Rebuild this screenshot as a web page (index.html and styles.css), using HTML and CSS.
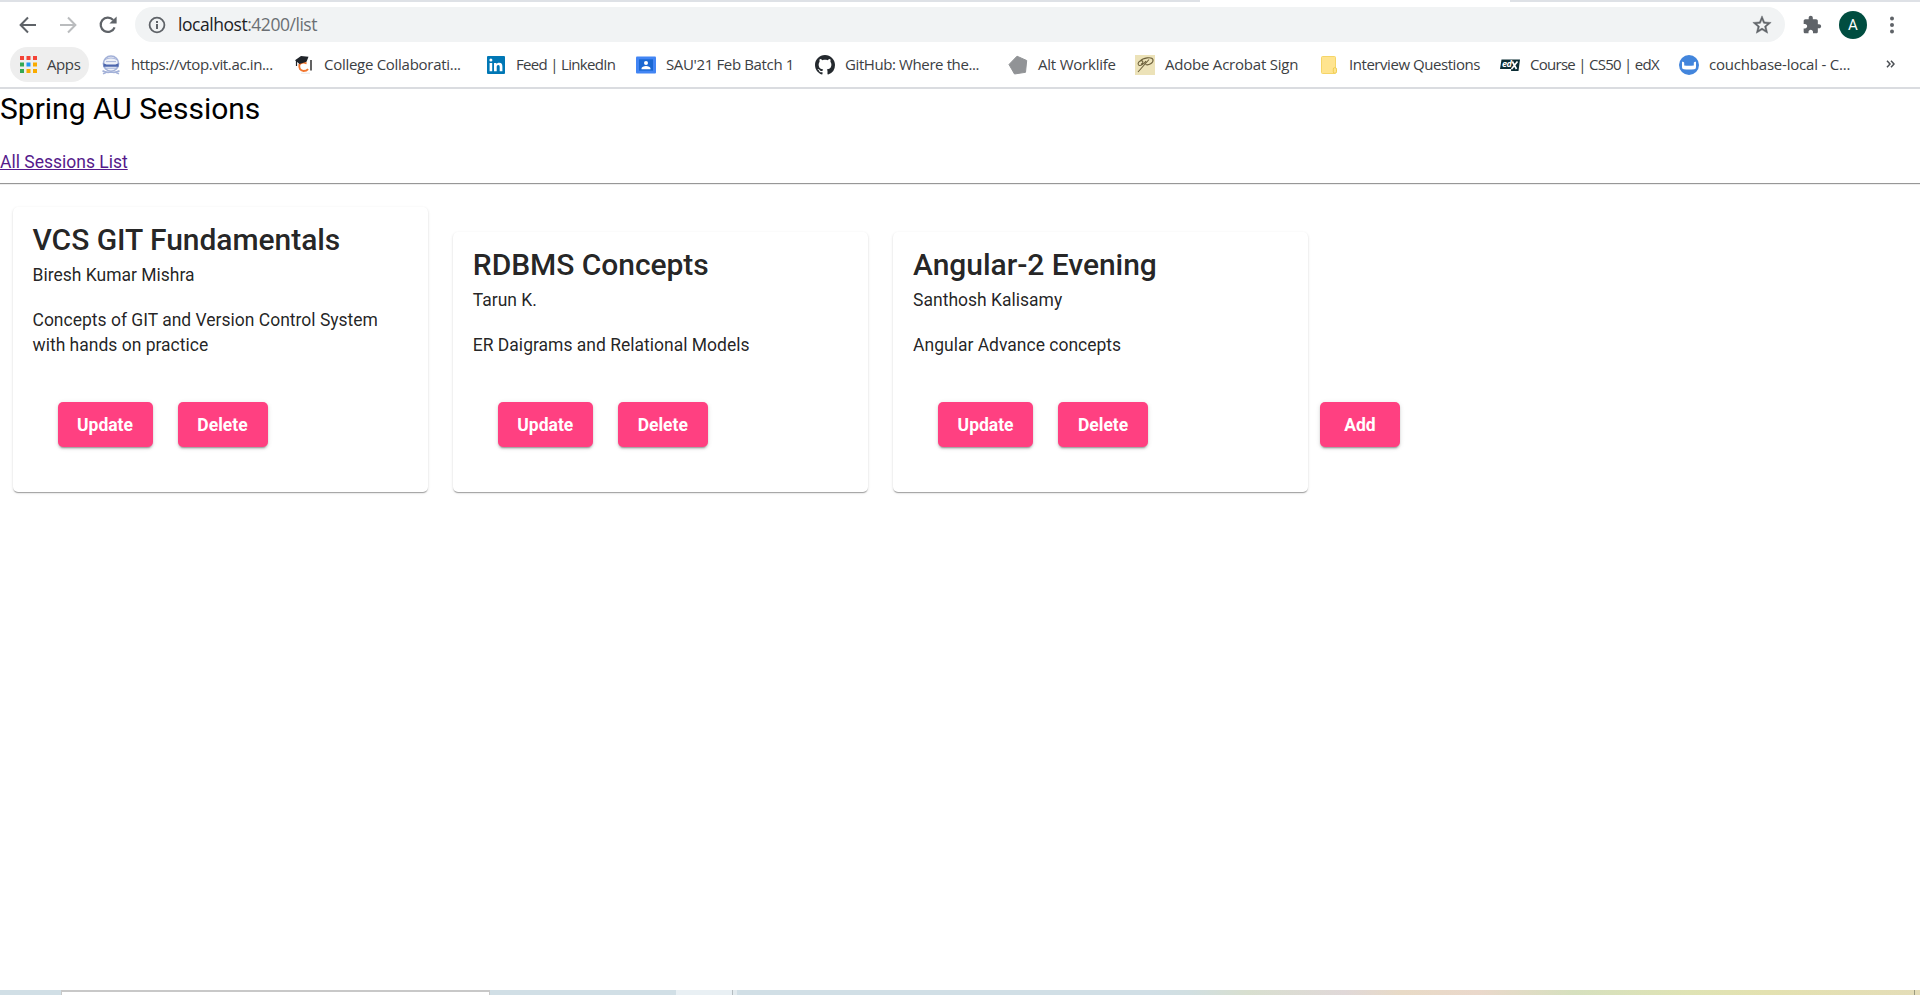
FILE: index.html
```html
<!DOCTYPE html>
<html lang="en">
<head>
<meta charset="utf-8">
<title>Spring AU Sessions</title>
<link rel="stylesheet" href="styles.css">
</head>
<body>
<div class="tabstrip"><span class="tab-active"></span></div>
<header class="toolbar">
  <svg class="nav" viewBox="0 0 20 20"><path d="M18 10H3M10 2.5L2.6 10l7.4 7.5" fill="none" stroke="#5f6368" stroke-width="2"/></svg>
  <svg class="nav" viewBox="0 0 20 20"><path d="M2 10h15M10 2.5l7.4 7.5-7.4 7.5" fill="none" stroke="#babcbe" stroke-width="2"/></svg>
  <svg class="nav" viewBox="0 0 20 20"><path d="M16.6 12.3A7.2 7.2 0 1 1 15.2 4.9" fill="none" stroke="#5f6368" stroke-width="2.2"/><path d="M18.6 1.4v7.2h-7.2z" fill="#5f6368"/></svg>
  <div class="omnibox">
    <svg class="info" viewBox="0 0 18 18"><circle cx="9" cy="9" r="7.4" fill="none" stroke="#5f6368" stroke-width="1.8"/><path d="M8 8h2v5H8zM8 5h2v2H8z" fill="#5f6368"/></svg>
    <span class="url">localhost<span class="path">:4200/list</span></span>
    <svg class="star" viewBox="0 0 24 24"><path fill="#5f6368" stroke="#5f6368" stroke-width=".5" d="M22 9.240l-7.190-.62L12 2 9.190 8.630 2 9.240l5.460 4.730L5.820 21 12 17.270 18.180 21l-1.630-7.030L22 9.240zM12 15.400l-3.760 2.270 1-4.280-3.320-2.880 4.380-.38L12 6.100l1.710 4.040 4.380.38-3.320 2.880 1 4.280L12 15.400z"/></svg>
  </div>
  <svg class="ext" viewBox="0 0 24 24"><path fill="#5f6368" d="M20.5 11H19V7c0-1.100-.9-2-2-2h-4V3.500C13 2.120 11.880 1 10.500 1S8 2.120 8 3.500V5H4c-1.100 0-1.990.9-1.990 2v3.800H3.500c1.490 0 2.700 1.210 2.700 2.700s-1.210 2.700-2.700 2.700H2V20c0 1.100.9 2 2 2h3.800v-1.500c0-1.490 1.210-2.700 2.700-2.700 1.490 0 2.700 1.210 2.700 2.700V22H17c1.100 0 2-.9 2-2v-4h1.500c1.380 0 2.500-1.120 2.500-2.500S21.880 11 20.500 11z"/></svg>
  <span class="avatar">A</span>
  <svg class="menu" viewBox="0 0 4 18"><g fill="#5f6368"><circle cx="2" cy="2.600" r="2"/><circle cx="2" cy="9" r="2"/><circle cx="2" cy="15.400" r="2"/></g></svg>
</header>
<nav class="bookmarks">
  <a class="apps"><svg viewBox="0 0 17 17"><path fill="#f44336" d="M0 0h4v4H0zM6.500 0h4v4h-4zM13 0h4v4h-4z"/><path fill="#34a853" d="M0 6.500h4v4H0zM0 13h4v4H0z"/><path fill="#2196f3" d="M6.500 6.500h4v4h-4z"/><path fill="#f9ab00" d="M13 6.500h4v4h-4zM13 13h4v4h-4zM6.500 13h4v4h-4z"/></svg><span class="t-apps">Apps</span></a>
  <a class="bm b-vtop"><svg viewBox="0 0 20 20"><circle cx="10" cy="8.600" r="7.600" fill="#eef1f8" stroke="#a3b1d8" stroke-width="1.600"/><path d="M4 4.600Q10 1.400 16 4.600M5 6.600h10" stroke="#a9b5da" fill="none"/><path d="M2.500 8.300l3 1.200h9l3-1.200v3.400h-15z" fill="#4c66ad"/><path d="M4 13.200h12" stroke="#a3b1d8"/><path d="M1.500 15.800q4 2.400 8.500 1.200 4.500 1.200 8.500-1.200M2 18.800l3-1.300M18 18.800l-3-1.300" fill="none" stroke="#a3b1d8" stroke-width="1.600"/></svg><span>https://vtop.vit.ac.in...</span></a>
  <a class="bm b-college"><svg viewBox="0 0 20 20"><path d="M12.600 8.300Q7.500 6.500 5.400 9.600 4.500 15.300 9.500 16q3 0 4.600-1.900" fill="none" stroke="#f2762e" stroke-width="1.900"/><path d="M1 5.200L7 1l7.500.8-2 5-7 2.200z" fill="#20242a"/><path d="M2.500 6v5" stroke="#20242a" stroke-width="1.200"/><path d="M17 5v10.500" stroke="#3b3b3b" stroke-width="1.600"/><path d="M7 18.200h9" stroke="#ddd" stroke-width=".7"/></svg><span>College Collaborati...</span></a>
  <a class="bm b-linkedin"><svg viewBox="0 0 20 20"><rect x="1" y="1" width="18" height="18" rx="1" fill="#0077b5"/><path fill="#fff" d="M3.600 8h2.600v8.300H3.600zM8 8h2.500v1.200c.7-1 1.600-1.400 2.700-1.400 2.500 0 3.200 1.600 3.200 4v4.500h-2.700V12.200c0-1.300-.3-2.100-1.400-2.100-1.200 0-1.600.9-1.600 2.100v4.100H8z"/><circle cx="4.900" cy="5" r="1.500" fill="#fff"/></svg><span>Feed | LinkedIn</span></a>
  <a class="bm b-sau"><svg viewBox="0 0 20 20"><rect y="1.500" width="20" height="17" rx="1" fill="#4285f4"/><rect x="3" y="4.300" width="14" height="11.400" fill="#1967d2"/><circle cx="10" cy="8" r="2" fill="#fff"/><path fill="#fff" d="M5.500 14.200v-.8c0-1.600 2.300-2.500 4.500-2.500s4.500.9 4.500 2.500v.8z"/></svg><span>SAU'21 Feb Batch 1</span></a>
  <a class="bm b-github"><svg viewBox="0 0 16 16"><path fill="#24292e" d="M8 0C3.580 0 0 3.580 0 8c0 3.540 2.290 6.530 5.470 7.590.4.070.55-.17.55-.38 0-.19-.01-.82-.01-1.490-2.010.37-2.530-.49-2.690-.94-.09-.23-.48-.94-.82-1.130-.28-.15-.68-.52-.01-.53.63-.01 1.080.58 1.230.82.72 1.210 1.870.87 2.330.66.07-.52.28-.87.51-1.070-1.780-.2-3.640-.89-3.640-3.950 0-.87.31-1.590.82-2.150-.08-.2-.36-1.020.08-2.120 0 0 .67-.21 2.200.82.64-.18 1.320-.27 2-.27s1.360.09 2 .27c1.530-1.040 2.200-.82 2.200-.82.44 1.100.16 1.920.08 2.120.51.56.82 1.270.82 2.150 0 3.070-1.870 3.750-3.650 3.950.29.25.54.73.54 1.480 0 1.070-.01 1.930-.01 2.200 0 .21.15.46.55.38A8.010 8.010 0 0 0 16 8c0-4.420-3.580-8-8-8z"/></svg><span>GitHub: Where the...</span></a>
  <a class="bm b-alt"><svg viewBox="0 0 20 20"><path fill="#919396" stroke="#919396" stroke-linejoin="round" d="M9 1.200l9.700 4.300-1.200 11.800-11 1.700L1 9.500z"/></svg><span>Alt Worklife</span></a>
  <a class="bm b-adobe"><svg viewBox="0 0 20 20"><rect width="20" height="20" fill="#ece2b8"/><path d="M6 8.800c1.800.4 2.600-2.600 1-2.900C4.800 5.300 2.300 8 3.400 9.700 5 12 9.600 8.400 11 6M5 6.300C8 2.600 17 1.500 18 4.700c.7 3.300-4.500 6-7.400 4.800M14 4.500L3 17" fill="none" stroke="#6b5f3a" stroke-width="1.100"/></svg><span>Adobe Acrobat Sign</span></a>
  <a class="bm b-note"><svg viewBox="0 0 20 20"><rect x="1.500" y="1.500" width="14" height="17" rx="1" fill="#ffe48f" stroke="#f5d568"/><rect x="13.300" y="12.700" width="3.200" height="5.500" rx="1.400" fill="#ffe48f" stroke="#efcd50"/></svg><span>Interview Questions</span></a>
  <a class="bm b-edx"><svg viewBox="0 0 20 20"><path fill="#0b2c33" d="M1.500 4.500h18.500l-1.500 11.500h-7.500l.3-2H0z"/><text class="edx" x="2" y="12.300">ed</text><path d="M12.300 6.500l4.200 7.500M17.500 6.500l-6 7.500" stroke="#fff" stroke-width="1.700"/></svg><span>Course | CS50 | edX</span></a>
  <a class="bm b-couch"><svg viewBox="0 0 20 20"><circle cx="10" cy="10" r="10" fill="#4285dc"/><path fill="#fff" d="M3 6.800q1.800-.3 2.200 1v2.600q4.800.6 9.600 0V7.800q.4-1.300 2.200-1v5.500q0 1.800-1.800 2-5.200.6-10.400 0Q3 14.100 3 12.300z"/></svg><span>couchbase-local - C...</span></a>
  <svg class="more" viewBox="0 0 9 8"><path d="M1 .7L4 4 1 7.300M5 .7L8 4 5 7.300" fill="none" stroke="#4b4f54" stroke-width="1.500"/></svg>
</nav>
<main class="page">
  <h1 class="heading">Spring AU Sessions</h1>
  <a class="list-link" href="#">All Sessions List</a>
  <hr class="rule">
  <section class="sessions">
    <article class="card">
      <h2 class="title">VCS GIT Fundamentals</h2>
      <p class="speaker">Biresh Kumar Mishra</p>
      <p class="desc">Concepts of GIT and Version Control System with hands on practice</p>
      <div class="actions"><button class="btn update">Update</button><button class="btn delete">Delete</button></div>
    </article>
    <article class="card">
      <h2 class="title">RDBMS Concepts</h2>
      <p class="speaker">Tarun K.</p>
      <p class="desc">ER Daigrams and Relational Models</p>
      <div class="actions"><button class="btn update">Update</button><button class="btn delete">Delete</button></div>
    </article>
    <article class="card">
      <h2 class="title">Angular-2 Evening</h2>
      <p class="speaker">Santhosh Kalisamy</p>
      <p class="desc">Angular Advance concepts</p>
      <div class="actions"><button class="btn update">Update</button><button class="btn delete">Delete</button></div>
    </article>
    <button class="btn add">Add</button>
  </section>
</main>
<footer class="taskbar"><span class="search"></span><span class="active-app"></span><span class="app-edge"></span><span class="peek"></span></footer>
</body>
</html>
```
FILE: styles.css
```css
* { box-sizing: border-box; }
body {
  margin: 0;
  height: 995px;
  display: flex;
  flex-direction: column;
  overflow: hidden;
  background: #fff;
  font-family: Roboto, sans-serif;
}
svg { display: block; flex: none; }

/* Browser frame */
.tabstrip { height: 2px; background: #dee1e6; flex: none; }
.tab-active { display: block; width: 310px; height: 2px; margin-left: 1200px; background: #fff; }
.toolbar {
  flex: none;
  height: 45px;
  display: flex;
  align-items: center;
  padding-left: 17.5px;
}
.nav { width: 20px; height: 20px; margin-right: 20px; }
.omnibox {
  width: 1650px;
  height: 35px;
  margin-left: -2.5px;
  border-radius: 18px;
  background: #f1f3f4;
  display: flex;
  align-items: center;
  padding: 0 12px 0 13px;
}
.info { width: 18px; height: 18px; }
.url {
  flex: 1;
  margin-left: 12px;
  font: 17.5px/35px "Open Sans", sans-serif;
  letter-spacing: -0.46px;
  color: #202124;
}
.path { color: #6b6f73; }
.star { width: 22px; height: 22px; }
.ext { width: 20px; height: 20px; margin-left: 17px; }
.avatar {
  width: 28px;
  height: 28px;
  margin-left: 17px;
  border-radius: 50%;
  background: #004d40;
  color: #fff;
  font-size: 15px;
  line-height: 29px;
  text-align: center;
}
.menu { width: 4px; height: 18px; margin-left: 23px; }

.bookmarks {
  flex: none;
  height: 42px;
  display: flex;
  align-items: center;
  padding: 0 0 5px 10px;
  border-bottom: 2px solid #dadce0;
  font: 15px/35px "Open Sans", sans-serif;
  color: #3c4043;
  white-space: nowrap;
}
.apps {
  display: flex;
  align-items: center;
  width: 79px;
  height: 35px;
  padding-left: 9.5px;
  margin-right: 12px;
  border-radius: 18px;
  background: #eee;
}
.apps svg { width: 17px; height: 17px; margin-right: 10.5px; }
.t-apps { letter-spacing: -0.4px; }
.bm { display: flex; align-items: center; flex: none; gap: 10px; }
.bm svg { width: 20px; height: 20px; }
.b-vtop { width: 193px; letter-spacing: -0.37px; }
.b-college { width: 192px; letter-spacing: -0.28px; }
.b-linkedin { width: 150px; letter-spacing: -0.68px; }
.b-sau { width: 179px; letter-spacing: -0.36px; }
.b-github { width: 193px; letter-spacing: -0.4px; }
.b-alt { width: 127px; letter-spacing: -0.22px; }
.b-adobe { width: 185px; letter-spacing: -0.22px; }
.b-note { width: 180px; letter-spacing: -0.45px; }
.b-edx { width: 179px; letter-spacing: -0.72px; }
.b-couch { width: 207px; letter-spacing: -0.2px; }
.b-note svg { margin-right: -1px; }
.edx { font: italic 700 9px "Open Sans", sans-serif; fill: #fff; letter-spacing: -0.5px; }
.more { width: 9px; height: 8px; margin-top: -1px; }

/* Sessions page */
.page { flex: 1; }
.heading { margin: 0 0 21px; font-size: 30px; line-height: 40px; font-weight: 400; color: #000; }
.list-link { display: block; width: max-content; font-size: 17.5px; line-height: 25px; color: #551a8b; text-decoration: underline; }
.rule { height: 2px; margin: 8px 0 9px; border: 0; border-top: 1px solid #979797; background: #eee; }
.sessions { display: flex; align-items: flex-end; gap: 25px; padding: 13px 12.5px 0; }
.card {
  width: 415.3px;
  padding: 20px 20px 45px;
  border-radius: 5px;
  background: #fff;
  color: rgba(0, 0, 0, 0.87);
  font-size: 17.5px;
  line-height: 25px;
  box-shadow: 0 2px 1px -1px rgba(0, 0, 0, 0.2), 0 1px 1px rgba(0, 0, 0, 0.14), 0 1px 3px rgba(0, 0, 0, 0.12);
}
.title { margin: 0 0 11px; font-size: 30px; line-height: 25px; font-weight: 500; letter-spacing: -0.05px; }
.speaker { margin: 0 0 20px; }
.desc { margin: 0; }
.actions { display: flex; gap: 25px; padding: 44px 0 0 25px; }
.btn {
  height: 45px;
  padding: 2px 0 0;
  border: 0;
  border-radius: 5px;
  background: #ff4081;
  color: #fff;
  font: 700 17.5px/43px Roboto, sans-serif;
  box-shadow: 0 3px 1px -2px rgba(0, 0, 0, 0.2), 0 2px 2px rgba(0, 0, 0, 0.14), 0 1px 5px rgba(0, 0, 0, 0.12);
}
.update { width: 95px; }
.delete { width: 90px; }
.add { width: 80px; margin: 0 0 45px -13.500px; }

/* Desktop taskbar */
.taskbar {
  flex: none;
  height: 5px;
  display: flex;
  background: linear-gradient(90deg, #d1dfe6 0 60%, #d1dfe1 62%, #d8dfcf 65%, #e0d8d8 70%, #e8dac6 73%, #ead8cb 77%, #d6e0be 82%, #dfe3b4 88%, #e3e1b0 92%, #e4ddb8);
}
.search { width: 429px; margin-left: 61px; background: #fff; border: 1px solid #c8c8c8; border-top-width: 2px; border-bottom: 0; }
.active-app { width: 57px; margin-left: 186px; background: #e9f0f4; border-right: 1px solid #b4bcc0; }
.app-edge { width: 4px; background: #e3ebef; }
.peek { width: 1px; margin: 0 5px 0 auto; background: #9a9a80; }
```
